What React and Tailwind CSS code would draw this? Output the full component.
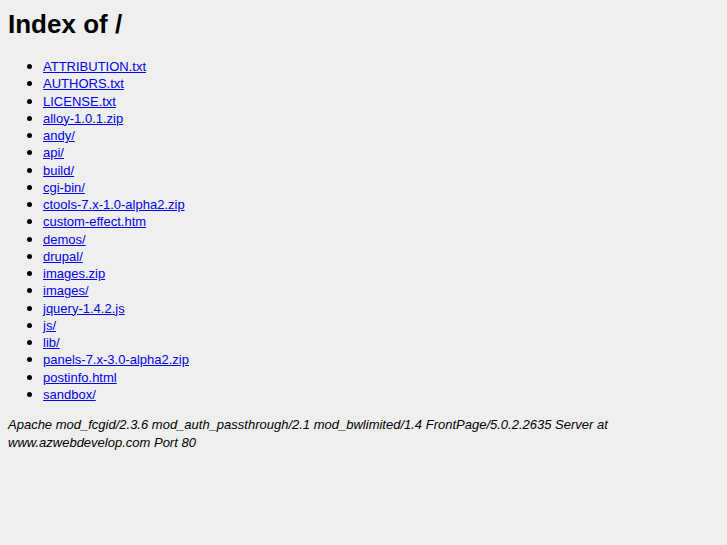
const ENTRIES = [
  'ATTRIBUTION.txt',
  'AUTHORS.txt',
  'LICENSE.txt',
  'alloy-1.0.1.zip',
  'andy/',
  'api/',
  'build/',
  'cgi-bin/',
  'ctools-7.x-1.0-alpha2.zip',
  'custom-effect.htm',
  'demos/',
  'drupal/',
  'images.zip',
  'images/',
  'jquery-1.4.2.js',
  'js/',
  'lib/',
  'panels-7.x-3.0-alpha2.zip',
  'postinfo.html',
  'sandbox/',
];

export default function App() {
  return (
    <div className="min-h-[545px] bg-[#efefef] px-2 pt-[9px] font-['Liberation_Sans',Arial,sans-serif] text-[13px] text-black">
      <h1 className="text-[26px] font-bold leading-[30px]">Index of /</h1>
      <ul className="mt-[19px] list-disc pl-[35px] marker:text-[15px] marker:leading-[0]">
        {ENTRIES.map((name) => (
          <li key={name} className="h-[17.26px] leading-[17.26px]">
            <a href={name} className="text-[#0000ee] underline">
              {name}
            </a>
          </li>
        ))}
      </ul>
      <address className="mt-[13px] italic leading-[18px]">
        Apache mod_fcgid/2.3.6 mod_auth_passthrough/2.1 mod_bwlimited/1.4 FrontPage/5.0.2.2635 Server at www.azwebdevelop.com Port 80
      </address>
    </div>
  );
}
